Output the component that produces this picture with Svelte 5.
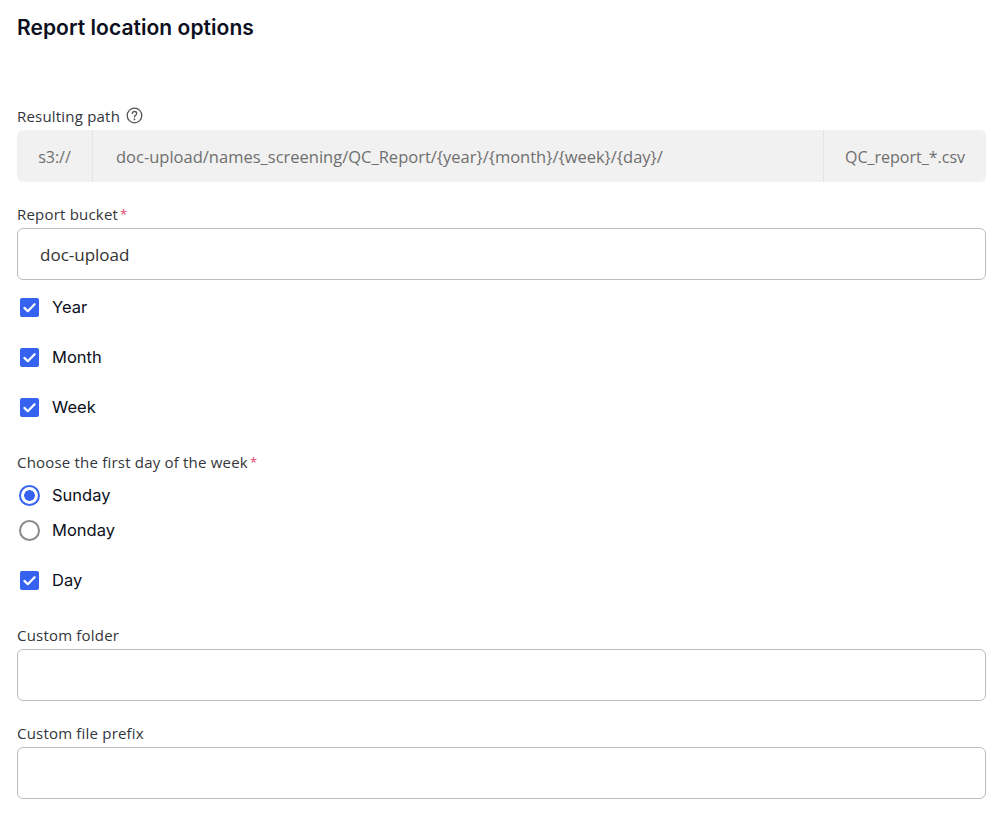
<script>
  const checks1 = ['Year', 'Month', 'Week'];
</script>

{#snippet check(text)}
  <div class="check-row">
    <span class="box">
      <svg width="19" height="19" viewBox="0 0 19 19" fill="none"><path d="M4.4 9.9l3.4 3.3 6.8-7" stroke="#fff" stroke-width="2.2" stroke-linecap="round" stroke-linejoin="round"/></svg>
    </span>
    <span class="opt">{text}</span>
  </div>
{/snippet}

<main class="page">
  <h1>Report location options</h1>

  <div class="label path-label">
    <span>Resulting path</span>
    <svg class="help" width="17" height="17" viewBox="0 0 17 17" fill="none">
      <circle cx="8.5" cy="8.5" r="7.3" stroke="#555" stroke-width="1.3"/>
      <path d="M6.3 6.6c0-1.3 1-2.1 2.2-2.1s2.2.8 2.2 2c0 1.7-2.2 1.7-2.2 3.5" stroke="#555" stroke-width="1.3" stroke-linecap="round"/>
      <circle cx="8.5" cy="12.4" r=".9" fill="#555"/>
    </svg>
  </div>
  <div class="path">
    <span class="seg scheme">s3://</span>
    <span class="seg mid">doc-upload/names_screening/QC_Report/&#123;year&#125;/&#123;month&#125;/&#123;week&#125;/&#123;day&#125;/</span>
    <span class="seg file">QC_report_*.csv</span>
  </div>

  <div class="label bucket-label"><span>Report bucket</span><span class="req">*</span></div>
  <div class="input">doc-upload</div>

  <div class="checks">
    {#each checks1 as c}
      {@render check(c)}
    {/each}
  </div>

  <div class="label day-label"><span>Choose the first day of the week</span><span class="req">*</span></div>
  <div class="radios">
    <div class="radio-row"><span class="radio on"></span><span class="opt">Sunday</span></div>
    <div class="radio-row"><span class="radio"></span><span class="opt">Monday</span></div>
  </div>
  <div class="day-check">{@render check('Day')}</div>

  <div class="label folder-label">Custom folder</div>
  <div class="input"></div>

  <div class="label prefix-label">Custom file prefix</div>
  <div class="input"></div>
</main>

<style>
  :global(body) {
    background: #fff;
  }
  .page {
    box-sizing: border-box;
    width: 1000px;
    height: 820px;
    padding: 14px 14px 0 17px;
    font-family: "Open Sans", "Noto Sans", sans-serif;
    color: #2a2a2a;
  }
  h1 {
    margin: 0;
    font-family: "Inter", sans-serif;
    font-size: 21px;
    line-height: 28px;
    font-weight: 600;
    letter-spacing: 0.05px;
    color: #0c1021;
  }
  .label {
    font-size: 15px;
    line-height: 22px;
    height: 20px;
    color: #33363c;
    display: flex;
    align-items: center;
    letter-spacing: 0.2px;
  }
  .path-label { margin-top: 64px; margin-bottom: 4px; gap: 7px; }
  .help { margin-top: -2px; margin-left: -1px; }
  .bucket-label { margin-top: 22px; margin-bottom: 4px; }
  .day-label { margin-top: 20px; margin-bottom: 6px; }
  .folder-label { margin-top: 20px; margin-bottom: 4px; }
  .prefix-label { margin-top: 22px; margin-bottom: 4px; }
  .req { color: #e0446e; margin-left: 2px; font-size: 13px; margin-top: -1px; }
  .path {
    display: flex;
    height: 52px;
    background: #f1f1f1;
    border-radius: 6px;
    font-size: 16px;
    color: #6f6f6f;
  }
  .seg {
    display: flex;
    align-items: center;
    box-sizing: border-box;
    padding-top: 1px;
  }
  .scheme { width: 76px; justify-content: center; border-right: 1px solid #e5e5e5; }
  .mid { flex: 1; padding-left: 23px; font-size: 16.5px; }
  .file { width: 163px; justify-content: center; border-left: 1px solid #e5e5e5; }
  .input {
    box-sizing: border-box;
    height: 52px;
    border: 1px solid #bdbdbd;
    border-radius: 6px;
    padding: 0 22px;
    display: flex;
    align-items: center;
    font-size: 17px;
    color: #333;
  }
  .checks { display: flex; flex-direction: column; gap: 1px; margin-top: 3px; }
  .check-row {
    height: 49px;
    display: flex;
    align-items: center;
    padding-left: 3px;
    gap: 13px;
  }
  .box {
    width: 19px;
    height: 19px;
    background: #3563f0;
    border-radius: 2px;
    display: block;
    flex: none;
  }
  .box svg { display: block; }
  .opt {
    font-family: "Inter", sans-serif;
    font-size: 16.5px;
    color: #0c1021;
    padding-bottom: 2px;
  }
  .radios { display: flex; flex-direction: column; }
  .radio-row {
    height: 35px;
    display: flex;
    align-items: center;
    padding-left: 2px;
    gap: 12px;
  }
  .radio {
    box-sizing: border-box;
    width: 21px;
    height: 21px;
    border-radius: 50%;
    border: 2px solid #8a8a8a;
    flex: none;
  }
  .radio.on {
    border-color: #3563f0;
    background: radial-gradient(circle, #3563f0 0 5px, #fff 5.6px);
  }
  .day-check { margin-top: 8px; }
</style>
